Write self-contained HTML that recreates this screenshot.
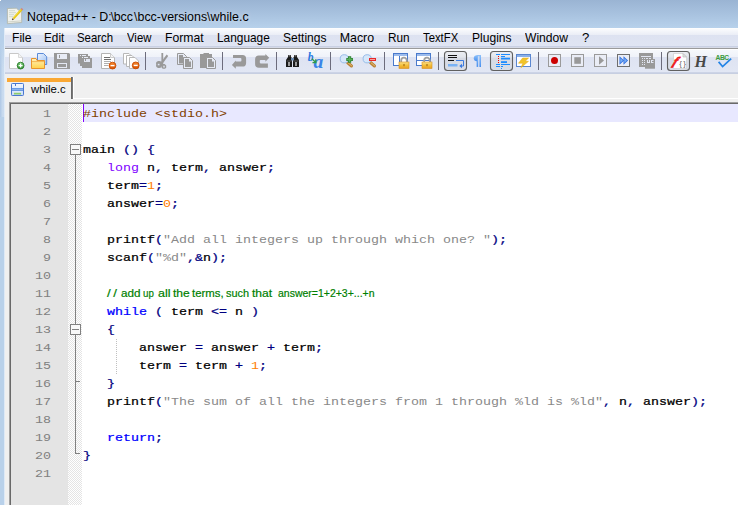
<!DOCTYPE html>
<html>
<head>
<meta charset="utf-8">
<title>Notepad++ - D:\bcc\bcc-versions\while.c</title>
<style>
html,body{margin:0;padding:0;}
body{width:738px;height:505px;overflow:hidden;position:relative;background:#b9d1ea;font-family:"Liberation Sans",sans-serif;}
#win{position:absolute;left:0;top:0;width:738px;height:505px;overflow:hidden;
 background:linear-gradient(180deg,#9ab4d3 0px,#a8c2df 14px,#b7d1eb 28px,#b9d1ea 60px,#b9d1ea 505px);}
#title{position:absolute;left:27px;top:9px;font-size:12.4px;line-height:16px;color:#000;white-space:pre;text-shadow:0 0 5px rgba(255,255,255,0.45),0 0 9px rgba(255,255,255,0.3);}
#menubar{position:absolute;left:5px;top:28px;width:733px;height:20px;
 background:linear-gradient(180deg,#ffffff 0px,#fafbfd 1px,#eaedf6 7px,#dde2f1 7.5px,#e0e5f3 18px,#c9d0e3 18px,#c9d0e3 19px,#d6dae7 19px,#d6dae7 20px);}
#menubar span{position:absolute;top:2px;font-size:12.4px;line-height:16px;color:#000;white-space:pre;transform-origin:0 50%;}
#menusep{position:absolute;left:5px;top:48px;width:733px;height:1px;background:#9a9a9a;}
#toolbar{position:absolute;left:5px;top:49px;width:733px;height:25px;
 background:linear-gradient(180deg,#ffffff 0px,#ffffff 1px,#f6f8fc 1px,#eff2f9 8px,#dee3f2 8.5px,#e2e7f4 23.5px,#cdd4e6 23.5px,#c4ccdf 25px);}
#tabbar{position:absolute;left:5px;top:74px;width:733px;height:431px;background:#f0f0f0;}
#tab{position:absolute;left:2px;top:4px;width:64px;height:21px;background:#f0f0f0;}
#tab .or{position:absolute;left:0;top:0;width:64px;height:4px;background:#faa834;}
#tab .rb{position:absolute;left:64px;top:-1px;width:2px;height:22px;background:linear-gradient(90deg,#696969 0,#696969 1px,#7a7a7a 1px,#7a7a7a 2px);}
#tab .name{position:absolute;left:24px;top:4.6px;font-size:11.3px;line-height:13px;color:#000;white-space:pre;}
#editor{position:absolute;left:9px;top:102px;width:729px;height:403px;background:#fff;border-left:1px solid #a0a0a0;border-top:1px solid #a0a0a0;box-sizing:border-box;}
#editor:before{content:"";position:absolute;left:0;top:0;width:728px;height:402px;border-left:1px solid #696969;border-top:1px solid #696969;box-sizing:border-box;}
#lnm{position:absolute;left:1px;top:1px;width:57px;height:401px;background:#e4e4e4;}
#fold{position:absolute;left:58px;top:1px;width:14px;height:401px;background:repeating-conic-gradient(#ffffff 0 25%,#e4e4e4 0 50%) 0 0/2px 2px;}
#cur{position:absolute;left:73px;top:1px;width:656px;height:18px;background:#e8e8ff;}
#caret{position:absolute;left:73px;top:1px;width:1px;height:18px;background:#8000ff;}
#lines{position:absolute;left:1px;top:2px;}
.ln{position:absolute;left:0;width:40px;text-align:right;font-family:"Liberation Mono",monospace;font-size:13.33px;line-height:18px;height:18px;color:#808080;transform-origin:0 12.5px;transform:scaleY(0.85);}
.cl{position:absolute;left:72px;font-family:"Liberation Mono",monospace;font-size:13.33px;line-height:18px;height:18px;white-space:pre;color:#000;transform-origin:0 12.5px;transform:scaleY(0.86);}
.k{color:#8000ff;}
.i{color:#0000ff;-webkit-text-stroke:0.28px #0000ff;}
.o{color:#000080;-webkit-text-stroke:0.28px #000080;}
.n{color:#ff8000;}
.s{color:#888888;}
.p{color:#804000;}
.b{-webkit-text-stroke:0.28px #000;}
.nc{transform:none;}
.c{position:absolute;top:-1px;color:#008000;-webkit-text-stroke:0.2px #008000;font-family:"Liberation Sans",sans-serif;font-size:11.5px;transform-origin:0 50%;white-space:pre;}

#frameL{position:absolute;left:0;top:28px;width:5px;height:89px;background:linear-gradient(90deg,#b2cae7 0px,#b6cde8 1.2px,#c6d9ee 1.8px,#cbdcf0 4.2px,#e0ebf7 4.4px,#e0ebf7 5px);}
#frameL0{position:absolute;left:0;top:28px;width:4.3px;height:40px;background:linear-gradient(180deg,#b7d0ea 0,#b7d0ea 35%,rgba(183,208,234,0) 100%);}
#frameL2{position:absolute;left:0;top:117px;width:5px;height:388px;background:linear-gradient(90deg,#b9d1ea 0px,#b9d1ea 4.2px,#dce8f6 4.4px,#e6eff9 5px);}
#corner{position:absolute;left:0;top:0;width:1px;height:1px;background:#fff;}
#tabhl{position:absolute;left:68px;top:24px;width:665px;height:1px;background:#ffffff;}
#tabvl{position:absolute;left:68px;top:3px;width:1px;height:22px;background:#ffffff;}

</style>
</head>
<body>
<div id="win">
 <div id="frameL"></div><div id="frameL0"></div><div id="frameL2"></div><div id="corner"></div>
 <svg id="appicon" width="18" height="18" viewBox="6 7 18 18" style="position:absolute;left:6px;top:7px">
  <path d="M7.400 8.500l9 -0.300l3 2.600l2.200 0.500l0.100 11.200l-8 0.600l-6.300 0.600z" fill="#f1f2ec" stroke="#aeb4a6" stroke-width="0.800"/>
  <path d="M9 10.700h6M9 12.700h7M9 14.700h5M9 16.700h4" stroke="#cdd6ca" stroke-width="0.900"/>
  <path d="M8 21.900l13.400 -1" stroke="#c8ccc0" stroke-width="0.800"/>
  <path d="M21.600 9.600l-8.200 9" stroke="#e6c614" stroke-width="2.300"/>
  <path d="M21.200 9.200l-8.200 9" stroke="#f6e658" stroke-width="0.700"/>
  <path d="M22.500 8.600l-1.100 1.200" stroke="#d08a80" stroke-width="2.300"/>
  <path d="M13.300 18.700l-1 1.100" stroke="#4a3420" stroke-width="1.400"/>
 </svg>

 <div id="title">Notepad++ - D:<span style="margin-left:-1.1px">\</span><span style="margin-left:-0.4px">bcc</span><span style="margin-left:0.9px">\</span><span style="margin-left:0.2px">bcc-versions</span>\<span style="letter-spacing:0.06px">while.c</span></div>
 <div id="menubar">
  <span style="left:6.7px;transform:scaleX(0.978)">File</span>
  <span style="left:38.8px;transform:scaleX(0.950)">Edit</span>
  <span style="left:72.4px;transform:scaleX(0.919)">Search</span>
  <span style="left:122.0px;transform:scaleX(0.915)">View</span>
  <span style="left:160.3px;transform:scaleX(0.984)">Format</span>
  <span style="left:212.3px;transform:scaleX(0.957)">Language</span>
  <span style="left:278.3px;transform:scaleX(0.970)">Settings</span>
  <span style="left:334.7px;transform:scaleX(1.000)">Macro</span>
  <span style="left:382.7px;transform:scaleX(0.952)">Run</span>
  <span style="left:418.3px;transform:scaleX(0.913)">TextFX</span>
  <span style="left:466.7px;transform:scaleX(0.974)">Plugins</span>
  <span style="left:520.3px;transform:scaleX(0.977)">Window</span>
  <span style="left:576.9px;transform:scaleX(1.060)">?</span>
 </div>
 <div id="menusep"></div>
 <div id="toolbar">
<svg id="tb" width="733" height="25" viewBox="5 49 733 25" style="position:absolute;left:0;top:0;overflow:visible">
<defs>
 <linearGradient id="gFold" x1="0" y1="0" x2="0" y2="1"><stop offset="0" stop-color="#fff3c0"/><stop offset="1" stop-color="#ffd24a"/></linearGradient>
 <linearGradient id="gBlueP" x1="0" y1="0" x2="1" y2="1"><stop offset="0" stop-color="#eef4fe"/><stop offset="1" stop-color="#9cc0f2"/></linearGradient>
 <linearGradient id="gBtn" x1="0" y1="0" x2="0" y2="1"><stop offset="0" stop-color="#eceef3"/><stop offset="0.3" stop-color="#e2e5ec"/><stop offset="0.35" stop-color="#d6dae4"/><stop offset="1" stop-color="#d9dde7"/></linearGradient>
 <linearGradient id="gLock" x1="0" y1="0" x2="0" y2="1"><stop offset="0" stop-color="#fbe08a"/><stop offset="0.5" stop-color="#f3bf3c"/><stop offset="1" stop-color="#e9a020"/></linearGradient>
 <linearGradient id="gGreen" x1="0" y1="0" x2="0" y2="1"><stop offset="0" stop-color="#7ed07e"/><stop offset="1" stop-color="#2e902e"/></linearGradient>
 <linearGradient id="gOr" x1="0" y1="0" x2="0" y2="1"><stop offset="0" stop-color="#f58a30"/><stop offset="1" stop-color="#d85000"/></linearGradient>
 <linearGradient id="gPil" x1="0" y1="0" x2="0" y2="1"><stop offset="0" stop-color="#8cc0fa"/><stop offset="1" stop-color="#4a90ee"/></linearGradient>
</defs>
<!-- separators -->
<g fill="#6c6c7c">
 <rect x="145" y="52" width="1" height="18"/><rect x="222" y="52" width="1" height="18"/><rect x="276" y="52" width="1" height="18"/>
 <rect x="330" y="52" width="1" height="18"/><rect x="384" y="52" width="1" height="18"/><rect x="438" y="52" width="1" height="18"/>
 <rect x="538" y="52" width="1" height="18"/><rect x="661" y="52" width="1" height="18"/>
</g>
<!-- 1 new -->
<g>
 <path d="M9.5 53.5h9l4 4v11h-13z" fill="#fff" stroke="#c8c8c8" stroke-width="1"/>
 <path d="M18.5 53.5v4h4" fill="#f4f4f4" stroke="#d0d0d0" stroke-width="0.8"/>
 <circle cx="20.6" cy="65.6" r="3.4" fill="url(#gGreen)" stroke="#2a7a2a" stroke-width="0.9"/>
 <path d="M18.6 65.6h4M20.6 63.6v4" stroke="#fff" stroke-width="1.3"/>
</g>
<!-- 2 open -->
<g>
 <path d="M37.5 53.5h6l3.2 3.2v7.8h-9.2z" fill="url(#gBlueP)" stroke="#5a8ad8" stroke-width="1"/>
 <path d="M31.5 58.5h4.5l1 2h7.5v8h-13z" fill="url(#gFold)" stroke="#e8952e" stroke-width="1"/>
 <path d="M32 61.6h12.5" stroke="#f0a840" stroke-width="0.8"/>
</g>
<!-- 3 save (disabled) -->
<g>
 <path d="M54 53h15l1 1v15h-16z" fill="#999"/>
 <rect x="57" y="54" width="10" height="5" fill="#e8ecf6"/>
 <rect x="59" y="55" width="1" height="3" fill="#999"/>
 <rect x="57.5" y="63.5" width="9" height="4" fill="none" stroke="#e4e8f3" stroke-width="1"/>
</g>
<!-- 4 save all (disabled) -->
<g>
 <path d="M78 54h10v9.5h-10z" fill="#999"/>
 <path d="M80 56h10v10h-10z" fill="#999"/>
 <path d="M82 58h10v10h-10z" fill="#999"/>
 <rect x="80" y="55" width="1" height="1" fill="#e8ecf6"/><rect x="82" y="55" width="4" height="1" fill="#e8ecf6"/>
 <rect x="82" y="57" width="1" height="1" fill="#e8ecf6"/><rect x="84" y="57" width="4" height="1" fill="#e8ecf6"/>
 <rect x="84" y="59" width="6" height="3" fill="#e2e6f2"/><rect x="85" y="59" width="1" height="2" fill="#999"/>
 <rect x="78" y="63.5" width="2" height="1" fill="#e2e6f2" opacity="0"/>
</g>
<!-- 5 close -->
<g>
 <path d="M101.5 53.5h9l4 4v11h-13z" fill="#fff" stroke="#b4b4b4" stroke-width="1"/>
 <path d="M110.500 53.5v4h4" fill="#f4f4f4" stroke="#c0c0c0" stroke-width="0.8"/>
 <path d="M104 57.5h6M104 59.500h7" stroke="#707070" stroke-width="1"/>
 <path d="M104 61.500h7M104 63.500h5M104 65.500h4" stroke="#b0b0b0" stroke-width="1"/>
 <circle cx="112.500" cy="65.600" r="3.400" fill="url(#gOr)" stroke="#c84a00" stroke-width="0.9"/>
 <path d="M110.500 65.600h4" stroke="#fff" stroke-width="1.400"/>
</g>
<!-- 6 close all -->
<g>
 <path d="M123.500 53.500h5.500l2 2v8.500h-7.500z" fill="#fff" stroke="#b8b8b8" stroke-width="1"/>
 <path d="M126.500 55.500h5.500l2.500 2.500v8.500h-8z" fill="#fff" stroke="#b8b8b8" stroke-width="1"/>
 <path d="M129.500 57.500h5.500l3.500 3.500v7.500h-9z" fill="#fff" stroke="#b8b8b8" stroke-width="1"/>
 <circle cx="135.700" cy="65.400" r="3.400" fill="url(#gOr)" stroke="#c84a00" stroke-width="0.9"/>
 <path d="M133.700 65.400h4" stroke="#fff" stroke-width="1.400"/>
</g>
<!-- 7 cut (disabled) -->
<g>
 <path d="M161.400 53h1.800v11.500h-1.800z" fill="#999"/>
 <path d="M166.700 54.600l1.500 1.300l-6.200 8.600l-2-1z" fill="#999"/>
 <path d="M156.200 64.500a2.900 2.700 0 0 1 5.800 -1.500l0 3a2.900 2.700 0 0 1 -5.800 -1.500z" fill="#999"/>
 <path d="M161.600 64h3l1.600 1.500v2.300l-1.200 1h-2.200l-1.200-1z" fill="#999"/>
 <rect x="157.800" y="63.800" width="1.700" height="1.500" fill="#e0e5f3"/>
 <rect x="163.300" y="65.700" width="1.400" height="1.800" fill="#e0e5f3"/>
</g>
<!-- 8 copy (disabled) -->
<g>
 <path d="M177.500 53.500h6l3 3v8h-9z" fill="#e6eaf4" stroke="#999" stroke-width="1"/>
 <path d="M179 55h4v2.500h2v6h-6z" fill="#999"/>
 <path d="M183.500 57.500h6l3 3v8h-9z" fill="#e6eaf4" stroke="#999" stroke-width="1"/>
 <path d="M185 59h4v2.500h2v5.500h-6z" fill="#999"/>
</g>
<!-- 9 paste (disabled) -->
<g>
 <path d="M200 54h3.500v-1h5.500v1h3v14h-12z" fill="#999"/>
 <path d="M206.500 57.500h6l3 3v8h-9z" fill="#e6eaf4" stroke="#999" stroke-width="1"/>
 <path d="M208 59h4v2.500h2v5.500h-6z" fill="#999"/>
</g>
<!-- 10 undo (disabled) -->
<path d="M233 55h9.500a3.600 3.600 0 0 1 3.600 3.600v4.300a3.600 3.600 0 0 1 -3.600 3.600h-6.700v2.200l-3.900-3.700l3.900-4.400v0.900h4.800a0.800 0.800 0 0 0 0.800-0.800v-1.800a0.800 0.800 0 0 0 -0.800-0.800h-7.600z" fill="#999"/>
<!-- 11 redo (disabled) -->
<path d="M267.900 67.800h-9a3.800 3.800 0 0 1 -3.800-3.800v-4.600a3.800 3.800 0 0 1 3.800-3.800h6.500v-1.600l3.800 3.800l-3.800 4v-1.800h-4.800a0.800 0.800 0 0 0 -0.800 0.800v1.800a0.800 0.800 0 0 0 0.800 0.800h7.300z" fill="#999"/>
<!-- 12 find (binoculars) -->
<g>
 <path d="M288 55h3v2l1 1v9h-6v-7l2-3z" fill="#1a1a1a"/>
 <path d="M294 55h3v2l2 3v7h-6v-9l1-1z" fill="#1a1a1a"/>
 <rect x="291" y="58" width="3" height="2.500" fill="#6a8ab0"/>
 <rect x="288" y="62" width="2" height="4" fill="#9a9a9a"/><rect x="295" y="62" width="2" height="4" fill="#9a9a9a"/>
 <rect x="286.500" y="60.500" width="5" height="1" fill="#555"/><rect x="293.500" y="60.500" width="5" height="1" fill="#555"/>
 <rect x="288.500" y="55" width="2" height="1.500" fill="#777"/><rect x="294.500" y="55" width="2" height="1.500" fill="#777"/>
</g>
<!-- 13 replace -->
<g font-family="'Liberation Serif',serif" font-weight="bold" font-style="italic" fill="#2a78e0">
 <text x="307.800" y="61" font-size="11.500">b</text>
 <text x="313.600" y="68.300" font-size="19.500" fill="#3a84e8">a</text>
 <path d="M311.800 58.800l3.200 3M315.800 59.300v3.300h-3.300" stroke="#2e9a4a" stroke-width="1.300" fill="none"/>
</g>
<!-- 14 zoom in -->
<g>
 <path d="M347.500 62.500l4 3.500" stroke="#b88030" stroke-width="3" stroke-linecap="round"/>
 <path d="M348 62.700l3.500 3" stroke="#e8c080" stroke-width="1" stroke-linecap="round"/>
 <circle cx="344.300" cy="58.800" r="4.100" fill="#d6e7fa" stroke="#98bce8" stroke-width="1"/>
 <path d="M346.300 59.500h6.600M349.600 56.200v6.600" stroke="#2a8030" stroke-width="3.200"/>
 <path d="M347 59.500h5.200M349.600 56.900v5.200" stroke="#58b058" stroke-width="1.600"/>
</g>
<!-- 15 zoom out -->
<g>
 <path d="M370.500 62.500l4 3.500" stroke="#b88030" stroke-width="3" stroke-linecap="round"/>
 <path d="M371 62.700l3.500 3" stroke="#e8c080" stroke-width="1" stroke-linecap="round"/>
 <circle cx="367.200" cy="58.800" r="4.100" fill="#d6e7fa" stroke="#98bce8" stroke-width="1"/>
 <rect x="369" y="58" width="7" height="3" fill="#e82828"/>
 <rect x="370" y="59" width="5" height="1" fill="#f8a0a0"/>
</g>
<!-- 16 sync V -->
<g>
 <rect x="393.500" y="53.500" width="14" height="12" fill="#fff" stroke="#4a7acc" stroke-width="1"/>
 <rect x="394" y="54" width="13" height="2" fill="#9cbcec"/>
 <path d="M399.500 56v9.500" stroke="#4a7acc" stroke-width="1"/>
 <path d="M401.200 62.500v-2a2.800 2.800 0 0 1 5.600 0v2" fill="none" stroke="#a0a0a0" stroke-width="1.800"/>
 <rect x="399" y="62" width="10" height="6.500" fill="url(#gLock)" stroke="#d89020" stroke-width="0.600"/>
 <rect x="403.400" y="64" width="1.200" height="2.200" fill="#a87010"/>
</g>
<!-- 17 sync H -->
<g>
 <rect x="416.500" y="53.500" width="14" height="12" fill="#fff" stroke="#4a7acc" stroke-width="1"/>
 <rect x="417" y="54" width="13" height="2" fill="#9cbcec"/>
 <path d="M417 60.500h13" stroke="#4a7acc" stroke-width="1"/>
 <path d="M424.200 62.500v-2a2.800 2.800 0 0 1 5.600 0v2" fill="none" stroke="#a0a0a0" stroke-width="1.800"/>
 <rect x="422" y="62" width="10" height="6.500" fill="url(#gLock)" stroke="#d89020" stroke-width="0.600"/>
 <rect x="426.400" y="64" width="1.200" height="2.200" fill="#a87010"/>
</g>
<!-- 18 wrap (pressed) -->
<g>
 <rect x="444.500" y="51.500" width="22" height="19" rx="3" ry="3" fill="url(#gBtn)" stroke="#606060" stroke-width="1.100"/>
 <path d="M448 55.500h9M448 57.500h9M448 60.500h6" stroke="#111" stroke-width="1"/>
 <path d="M456 60.500h7.500v5.500h-3" fill="none" stroke="#3a7ae0" stroke-width="1"/>
 <path d="M459.300 66l2.700-2.300v4.600z" fill="#3a7ae0"/>
 <rect x="448" y="64" width="9.500" height="2.500" fill="#7ab2f4"/>
</g>
<!-- 19 pilcrow -->
<g fill="url(#gPil)">
 <path d="M477 55.200h4v1h-4z"/>
 <path d="M476.600 55.200h1.600v11.700h-1.600z"/><path d="M479.400 55.200h1.600v11.700h-1.600z"/>
 <path d="M477 55.200a3.200 3 0 0 0 0 6z"/>
</g>
<!-- 20 indent guide (pressed) -->
<g>
 <rect x="490.500" y="51.500" width="22" height="19" rx="3" ry="3" fill="url(#gBtn)" stroke="#606060" stroke-width="1.100"/>
 <g fill="#1e8cff">
  <rect x="496" y="54" width="4" height="1"/><rect x="501" y="54" width="9" height="1"/>
  <rect x="501" y="56" width="4" height="1"/>
  <rect x="501" y="57.700" width="9" height="1.800"/>
  <rect x="501" y="61.200" width="6" height="1.800"/>
  <rect x="496" y="64" width="4" height="1"/><rect x="501" y="64" width="9" height="1"/>
  <rect x="496" y="66" width="4" height="1"/><rect x="501" y="66" width="2" height="1"/>
  <rect x="501" y="68" width="1" height="1"/>
 </g>
 <g fill="#f00000"><rect x="498" y="56" width="1" height="1"/><rect x="498" y="58" width="1" height="1"/><rect x="498" y="60" width="1" height="1"/><rect x="498" y="62" width="1" height="1"/></g>
</g>
<!-- 21 user dialog -->
<g>
 <rect x="516.500" y="54.500" width="14" height="12" fill="#fff" stroke="#5a86d0" stroke-width="1"/>
 <rect x="517" y="55" width="13" height="2" fill="#8ab0e8"/>
 <path d="M522.600 58h6l-3.400 3.300h3.300l-7.600 6.500l2-4.600h-4.400z" fill="#f2c428" stroke="#e0a818" stroke-width="0.500"/>
</g>
<!-- 22-25 macro -->
<g>
 <rect x="548.500" y="54.500" width="12" height="12" fill="#eaedf6" stroke="#9a9a9a" stroke-width="1"/>
 <circle cx="554.500" cy="60.400" r="3.500" fill="#cc0000"/>
 <rect x="571.500" y="54.500" width="12" height="12" fill="#eaedf6" stroke="#9a9a9a" stroke-width="1"/>
 <rect x="574.300" y="57.200" width="6.600" height="6.600" fill="#999"/>
 <rect x="594.500" y="54.500" width="12" height="12" fill="#eaedf6" stroke="#9a9a9a" stroke-width="1"/>
 <path d="M599 56.300l5 4.200l-5 4.200z" fill="#999"/>
 <rect x="617.500" y="54.500" width="12" height="12" fill="#eaedf6" stroke="#6e6e6e" stroke-width="1"/>
 <path d="M619.500 56.300l4.500 4.200l-4.500 4.200z" fill="#2a6ae0"/><path d="M623.500 56.300l4.500 4.200l-4.500 4.200z" fill="#2a6ae0"/>
 <path d="M620.300 58l2.600 2.500l-2.600 2.500z" fill="#7ab0f4"/><path d="M624.300 58l2.600 2.500l-2.600 2.500z" fill="#7ab0f4"/>
</g>
<!-- 26 save macro (disabled) -->
<g>
 <rect x="639" y="53" width="14" height="14" fill="#999"/>
 <rect x="645" y="59" width="10" height="9.700" fill="#999"/>
 <g fill="#e2e6f2">
  <rect x="641" y="56" width="10" height="1"/>
  <rect x="642" y="58" width="1" height="1"/><rect x="644" y="58" width="1" height="1"/><rect x="646" y="58" width="2" height="1"/><rect x="649" y="58" width="2" height="1"/>
  <rect x="642" y="60" width="1" height="1"/><rect x="644" y="60" width="1" height="1"/>
  <rect x="642" y="62" width="1" height="1"/><rect x="644" y="62" width="1" height="1"/>
  <rect x="642" y="64" width="1" height="1"/><rect x="644" y="64" width="1" height="1"/>
  <path d="M647 60h1v2h1v-2h1v3h-3zM651 60h2.500v1h-1.500v1h1.500v1h-2.500z"/>
 </g>
</g>
<!-- 27 function list (pressed) -->
<g>
 <rect x="667.500" y="51.500" width="22" height="19" rx="3" ry="3" fill="url(#gBtn)" stroke="#606060" stroke-width="1.100"/>
 <path d="M673.500 53.500h9.500l3.500 3.500v11.500h-13z" fill="#fff" stroke="#cfcfcf" stroke-width="0.700"/>
 <path d="M683 53.500v3.500h3.500z" fill="#e4e4e4" stroke="#bcbcbc" stroke-width="0.700"/>
 <text transform="translate(672.200 64.600) skewX(-24)" font-family="'Liberation Serif',serif" font-style="italic" font-weight="bold" font-size="11.500" fill="#f01818" stroke="#f01818" stroke-width="0.800">f</text>
 <text x="679.300" y="65.500" font-family="'Liberation Sans',sans-serif" font-size="8" fill="#686868" letter-spacing="1.300">{}</text>
</g>
<!-- 28 H -->
<text transform="translate(694.600 66.900) scale(0.890 0.975)" font-family="'Liberation Serif',serif" font-style="italic" font-weight="bold" font-size="18" fill="#484848">H</text>
<!-- 29 ABC -->
<g>
 <text x="715.600" y="59.800" font-family="'Liberation Sans',sans-serif" font-weight="bold" font-size="6.700" fill="#3a9a3a" letter-spacing="-0.450">ABC</text>
 <path d="M718.600 61.900l4 4.700l8.600-8" fill="none" stroke="#2484e6" stroke-width="1.700"/>
</g>
</svg>

 </div>
 <div id="tabbar">
  <div id="tabhl"></div><div id="tabvl"></div>
  <div id="tab"><div class="or"></div><div class="rb"></div><svg width="14" height="14" viewBox="11 83 14 14" style="position:absolute;left:4px;top:5px">
 <defs><linearGradient id="gFl" x1="0" y1="0" x2="0" y2="1"><stop offset="0" stop-color="#f4f8fe"/><stop offset="1" stop-color="#c8dcf8"/></linearGradient></defs>
 <rect x="11.500" y="83.500" width="12" height="12" rx="0.800" fill="url(#gFl)" stroke="#4a78d0" stroke-width="1"/>
 <rect x="12" y="88" width="11" height="3" fill="#6a9ae4"/>
 <rect x="12" y="89" width="11" height="1" fill="#8ab2ee"/>
 <rect x="14" y="92.500" width="7" height="2" fill="#8ccc6c"/>
 <rect x="13.500" y="91.500" width="8" height="1" fill="#e8f0fc"/>
 <rect x="15" y="84" width="1" height="2" fill="#4a78d0"/>
</svg>
<div class="name">while.c</div></div>
 </div>
 <div id="editor">
  <div id="lnm"></div>
  <div id="fold"></div>
  <div id="cur"></div>
  <div id="caret"></div>
  <div id="lines">
  <div class="ln" style="top:0px">1</div>
  <div class="cl" style="top:0px"><span class="p">#include &lt;stdio.h&gt;</span></div>
  <div class="ln" style="top:18px">2</div>
  <div class="ln" style="top:36px">3</div>
  <div class="cl" style="top:36px"><span class="b">main </span><span class="o">()</span> <span class="o">{</span></div>
  <div class="ln" style="top:54px">4</div>
  <div class="cl" style="top:54px">   <span class="k">long</span><span class="b"> n</span><span class="o">,</span><span class="b"> term</span><span class="o">,</span><span class="b"> answer</span><span class="o">;</span></div>
  <div class="ln" style="top:72px">5</div>
  <div class="cl" style="top:72px">   <span class="b">term</span><span class="o">=</span><span class="n">1</span><span class="o">;</span></div>
  <div class="ln" style="top:90px">6</div>
  <div class="cl" style="top:90px">   <span class="b">answer</span><span class="o">=</span><span class="n">0</span><span class="o">;</span></div>
  <div class="ln" style="top:108px">7</div>
  <div class="ln" style="top:126px">8</div>
  <div class="cl" style="top:126px">   <span class="b">printf</span><span class="o">(</span><span class="s">"Add all integers up through which one? "</span><span class="o">);</span></div>
  <div class="ln" style="top:144px">9</div>
  <div class="cl" style="top:144px">   <span class="b">scanf</span><span class="o">(</span><span class="s">"%d"</span><span class="o">,&amp;</span><span class="b">n</span><span class="o">);</span></div>
  <div class="ln" style="top:162px">10</div>
  <div class="ln" style="top:180px">11</div>
  <div class="cl nc" style="top:180px"><span class="c" style="left:24.2px;letter-spacing:2.3px;transform:scaleX(1.15)">//</span> <span class="c" style="left:38.49px;transform:scaleX(1.017)">add</span> <span class="c" style="left:60.38px;transform:scaleX(0.847)">up</span> <span class="c" style="left:74.56px;transform:scaleX(1.084)">all</span> <span class="c" style="left:89.58px;transform:scaleX(1.047)">the</span> <span class="c" style="left:108.61px;transform:scaleX(0.989)">terms,</span> <span class="c" style="left:142.53px;transform:scaleX(0.948)">such</span> <span class="c" style="left:168.67px;transform:scaleX(1.050)">that</span> <span class="c" style="left:194.54px;transform:scaleX(0.912)">answer=1+2+3+...+n</span></div>
  <div class="ln" style="top:198px">12</div>
  <div class="cl" style="top:198px">   <span class="i">while</span> <span class="o">(</span><span class="b"> term </span><span class="o">&lt;=</span><span class="b"> n </span><span class="o">)</span></div>
  <div class="ln" style="top:216px">13</div>
  <div class="cl" style="top:216px">   <span class="o">{</span></div>
  <div class="ln" style="top:234px">14</div>
  <div class="cl" style="top:234px">       <span class="b">answer </span><span class="o">=</span><span class="b"> answer </span><span class="o">+</span><span class="b"> term</span><span class="o">;</span></div>
  <div class="ln" style="top:252px">15</div>
  <div class="cl" style="top:252px">       <span class="b">term </span><span class="o">=</span><span class="b"> term </span><span class="o">+</span> <span class="n">1</span><span class="o">;</span></div>
  <div class="ln" style="top:270px">16</div>
  <div class="cl" style="top:270px">   <span class="o">}</span></div>
  <div class="ln" style="top:288px">17</div>
  <div class="cl" style="top:288px">   <span class="b">printf</span><span class="o">(</span><span class="s">"The sum of all the integers from 1 through %ld is %ld"</span><span class="o">,</span><span class="b"> n</span><span class="o">,</span><span class="b"> answer</span><span class="o">);</span></div>
  <div class="ln" style="top:306px">18</div>
  <div class="ln" style="top:324px">19</div>
  <div class="cl" style="top:324px">   <span class="i">return</span><span class="o">;</span></div>
  <div class="ln" style="top:342px">20</div>
  <div class="cl" style="top:342px"><span class="o">}</span></div>
  <div class="ln" style="top:360px">21</div>
  </div>
  <svg id="fm" width="60" height="401" viewBox="68 104 60 401" style="position:absolute;left:58px;top:1px" shape-rendering="crispEdges">
   <g fill="#808080">
    <rect x="75" y="155" width="1" height="169"/>
    <rect x="75" y="335" width="1" height="119"/>
    <rect x="76" y="381" width="4" height="1"/>
    <rect x="76" y="453" width="4" height="1"/>
   </g>
   <rect x="70.500" y="144.500" width="10" height="10" fill="#f8f8f8" stroke="#808080" stroke-width="1"/>
   <rect x="72" y="149" width="7" height="1" fill="#808080"/>
   <rect x="70.500" y="324.500" width="10" height="10" fill="#f8f8f8" stroke="#808080" stroke-width="1"/>
   <rect x="72" y="329" width="7" height="1" fill="#808080"/>
   <g fill="#c0c0c0">
    <rect x="116" y="339" width="1" height="1"/><rect x="116" y="341" width="1" height="1"/><rect x="116" y="343" width="1" height="1"/><rect x="116" y="345" width="1" height="1"/><rect x="116" y="347" width="1" height="1"/><rect x="116" y="349" width="1" height="1"/><rect x="116" y="351" width="1" height="1"/><rect x="116" y="353" width="1" height="1"/><rect x="116" y="355" width="1" height="1"/><rect x="116" y="357" width="1" height="1"/><rect x="116" y="359" width="1" height="1"/><rect x="116" y="361" width="1" height="1"/><rect x="116" y="363" width="1" height="1"/><rect x="116" y="365" width="1" height="1"/><rect x="116" y="367" width="1" height="1"/><rect x="116" y="369" width="1" height="1"/><rect x="116" y="371" width="1" height="1"/><rect x="116" y="373" width="1" height="1"/>
   </g>
  </svg>

 </div>
</div>
</body>
</html>
